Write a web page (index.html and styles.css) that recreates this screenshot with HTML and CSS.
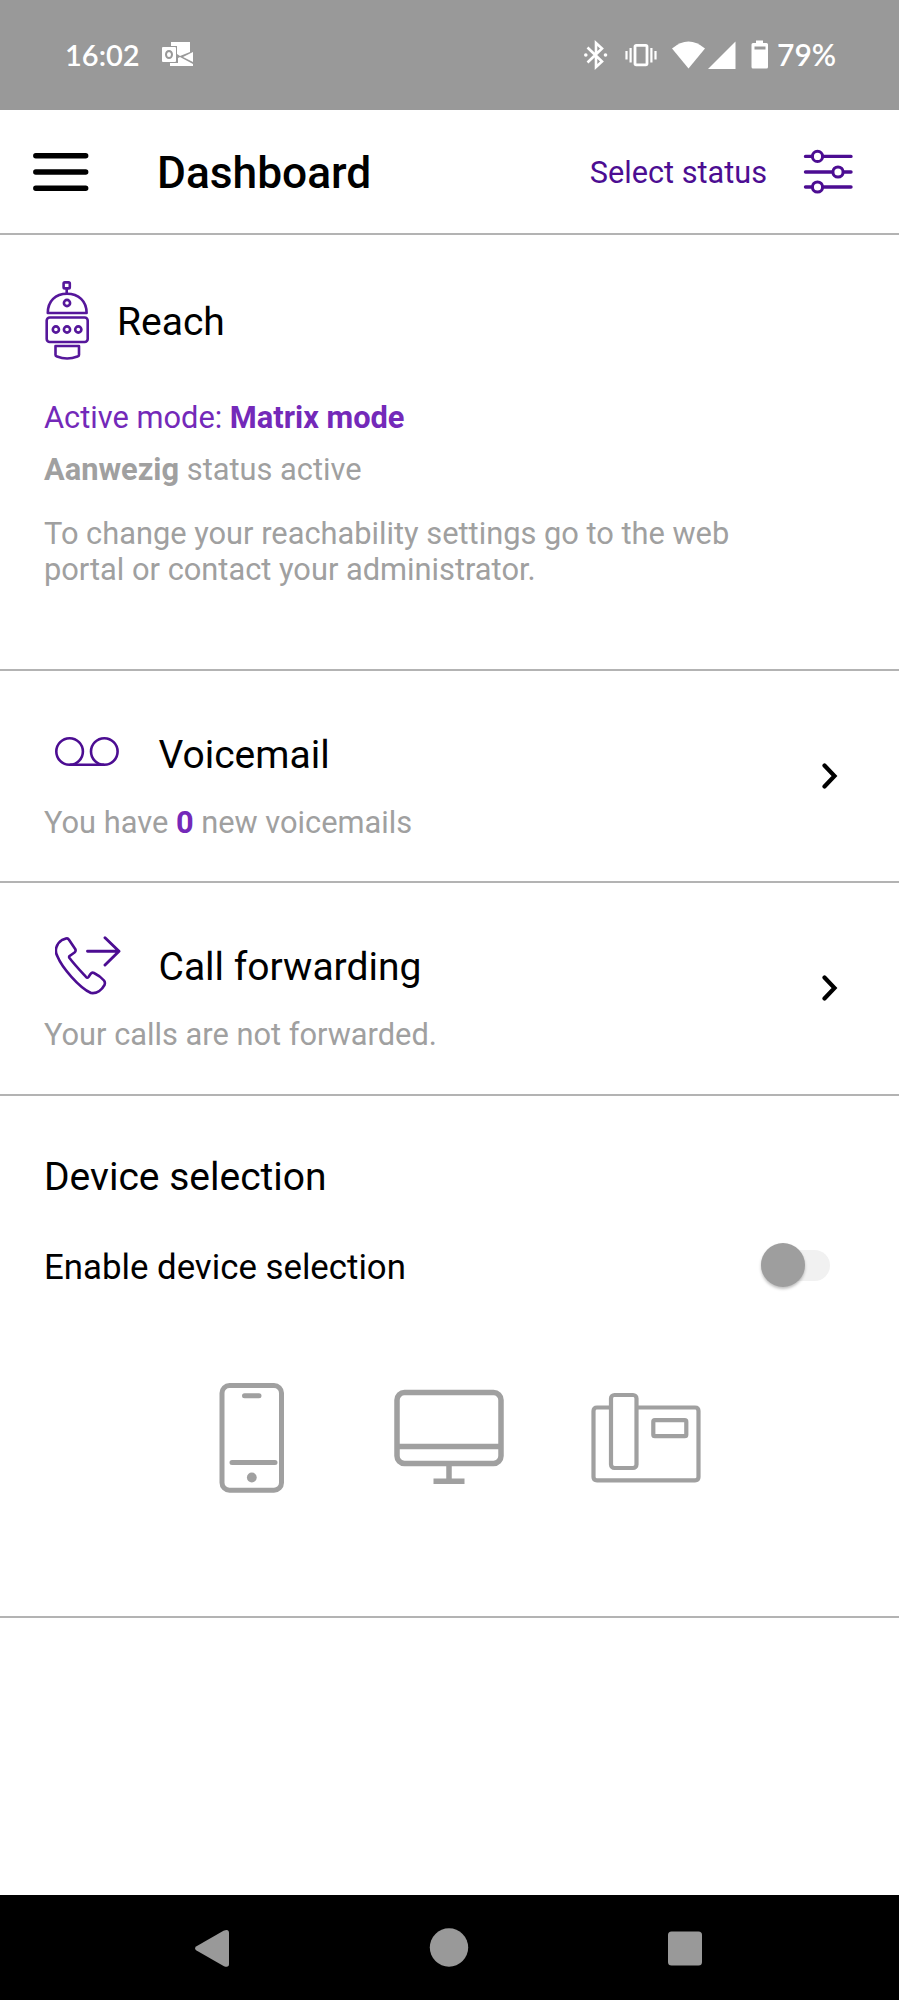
FILE: index.html
```
<!DOCTYPE html>
<html lang="en">
<head>
  <meta charset="utf-8">
  <title>Dashboard</title>
  <link rel="stylesheet" href="styles.css">
</head>
<body>
  <div class="status-bar">
    <span class="clock">16:02</span>
    <svg class="mail-icon" width="32" height="26" viewBox="0 0 32 26">
      <path d="M9 0H28V10L18 14L15 12V4H9Z" fill="#fff"/>
      <path d="M31 10V20L21 15Z" fill="#fff"/>
      <path d="M8 21H16V16L18 15L31 22V24H8Z" fill="#fff"/>
      <rect x="0" y="5" width="14" height="15" rx="1" fill="#fff"/>
      <ellipse cx="7" cy="12.5" rx="3" ry="3.6" fill="none" stroke="#999" stroke-width="2"/>
    </svg>
    <div class="status-icons">
      <svg class="bluetooth" width="24" height="30" viewBox="0 0 24 30" fill="none" stroke="#fff" stroke-width="2.6">
        <path d="M3.5 7.5L18 21.5L12 27V3L18 8.5L3.5 22.5"/>
        <circle cx="1.8" cy="15" r="1.8" fill="#fff" stroke="none"/>
        <circle cx="21.5" cy="15" r="1.8" fill="#fff" stroke="none"/>
      </svg>
      <svg class="vibrate" width="32" height="30" viewBox="0 0 32 30" fill="none" stroke="#fff">
        <rect x="10" y="5.4" width="12" height="19.4" rx="1.2" stroke-width="2.8"/>
        <path d="M1.5 11V19.5M5.6 8V22.5M26.4 8V22.5M30.5 11V19.5" stroke-width="2.2"/>
      </svg>
      <svg class="wifi" width="33" height="30" viewBox="0 0 33 30">
        <path d="M0 8.5Q16.5 -5.5 33 8.5L16.5 28.5Z" fill="#fff"/>
      </svg>
      <svg class="signal" width="28" height="30" viewBox="0 0 28 30">
        <path d="M0 29L27.5 1.5V29Z" fill="#fff"/>
      </svg>
      <svg class="battery" width="18" height="30" viewBox="0 0 18 30">
        <path d="M5 0.5H12V3H15.5Q17 3 17 4.500V27Q17 28.500 15.500 28.500H2Q0.500 28.500 0.500 27V4.500Q0.500 3 2 3H5Z" fill="#fff"/>
        <rect x="3.500" y="6.500" width="11" height="3" fill="#999"/>
      </svg>
      <span class="percent">79%</span>
    </div>
  </div>

  <header class="header">
    <svg width="56" height="40" viewBox="0 0 56 40">
      <path d="M2.800 3.700H52.700M2.800 20H52.700M2.800 36.200H52.700" stroke="#000" stroke-width="5.400" stroke-linecap="round"/>
    </svg>
    <h1 class="page-title">Dashboard</h1>
    <a class="select-status">Select status</a>
    <svg width="50" height="46" viewBox="0 0 50 46" fill="none" stroke="#4c0d92" stroke-width="3.400" stroke-linecap="round">
      <path d="M2.500 7.400H9M20 7.400H48M2.500 23H29.500M40.500 23H48M2.500 38H9M20 38H48"/>
      <circle cx="14.500" cy="7.400" r="5.100" stroke-width="3"/>
      <circle cx="35" cy="23" r="5.100" stroke-width="3"/>
      <circle cx="14.500" cy="38" r="5.100" stroke-width="3"/>
    </svg>
  </header>

  <section class="reach">
    <div class="reach-head">
      <svg width="44" height="79" viewBox="0 0 44 79" fill="none" stroke="#56179b" stroke-width="2.600" stroke-linejoin="round">
        <rect x="18.600" y="1.400" width="6.200" height="6" rx="1.200"/>
        <path d="M21.700 7.500V12.500"/>
        <path d="M2.800 32C2.800 20 10.500 12.800 22 12.800S41.600 20 41.600 32Z"/>
        <circle cx="22" cy="22" r="3.100"/>
        <rect x="1.700" y="36.500" width="41" height="24.500" rx="3"/>
        <circle cx="10.900" cy="48.500" r="3.100"/>
        <circle cx="22" cy="48.500" r="3.100"/>
        <circle cx="33.300" cy="48.500" r="3.100"/>
        <path d="M10.500 65H34V74Q34 75 32.500 75.500Q22 79.500 12 75.500Q10.500 75 10.500 74Z"/>
      </svg>
      <h2 class="title">Reach</h2>
    </div>
    <p class="mode">Active mode: <b>Matrix mode</b></p>
    <p class="presence"><b>Aanwezig</b> status active</p>
    <p class="hint">To change your reachability settings go to the web portal or contact your administrator.</p>
  </section>

  <section class="item voicemail">
    <div>
      <div class="item-head">
        <svg class="item-icon" width="66" height="60" viewBox="0 0 66 60" fill="none" stroke="#4c0d92" stroke-width="2.600">
          <circle cx="14.600" cy="27.500" r="13.300"/>
          <circle cx="49.300" cy="27.500" r="13.300"/>
          <path d="M14.600 40.800H49.300"/>
        </svg>
        <h2 class="title">Voicemail</h2>
      </div>
      <p class="info">You have <b>0</b> new voicemails</p>
    </div>
    <svg class="chevron" width="16" height="26" viewBox="0 0 16 26">
      <path d="M2.500 2.500L12.500 13L2.500 23.500" fill="none" stroke="#000" stroke-width="4.200" stroke-linecap="round"/>
    </svg>
  </section>

  <section class="item forwarding">
    <div>
      <div class="item-head">
        <svg class="item-icon" width="66" height="60" viewBox="0 0 66 60" fill="none" stroke="#4c0d92" stroke-width="2.600" stroke-linejoin="round" stroke-linecap="round">
          <path d="M7.500 3.700L11.500 2.200Q13.300 1.500 14.300 3.200L20.700 12.700Q21.800 14.700 20 16.200L15.500 19.400Q14 20.200 15 21.700C19.500 27.700 26.500 35.200 31.500 40.700Q32.800 42.200 34 40.700L36 37.700Q37.500 35.700 39.500 36.700C43.500 38.700 47 41.200 49.500 44.200Q51 46.200 50 48.700C47.500 53.200 42.500 57.700 36.500 56.700C24.500 51.200 7.500 31.200 3 20.200C-0.500 14.200 2 7.200 7.500 3.700Z" transform="translate(-0.500 0.300)"/>
          <path d="M32.500 15.300H63.500M50 1.700L64 15.300L50 29" stroke-width="2.900"/>
        </svg>
        <h2 class="title">Call forwarding</h2>
      </div>
      <p class="info">Your calls are not forwarded.</p>
    </div>
    <svg class="chevron" width="16" height="26" viewBox="0 0 16 26">
      <path d="M2.500 2.500L12.500 13L2.500 23.500" fill="none" stroke="#000" stroke-width="4.200" stroke-linecap="round"/>
    </svg>
  </section>

  <section class="devices">
    <h2 class="title">Device selection</h2>
    <div class="enable-row">
      <span class="enable-label">Enable device selection</span>
      <div class="switch"><div class="thumb"></div></div>
    </div>
    <div class="device-list">
      <svg width="110" height="110" viewBox="0 0 110 110" fill="none" stroke="#a0a0a0" stroke-width="5">
        <rect x="25" y="2.500" width="59.500" height="104.700" rx="7.500"/>
        <path d="M47.500 12.700H62M35 79.500H78" stroke-linecap="round"/>
        <circle cx="54.800" cy="94.500" r="4.900" fill="#a0a0a0" stroke="none"/>
      </svg>
      <svg width="110" height="110" viewBox="0 0 110 110" fill="none" stroke="#a0a0a0" stroke-width="5.500">
        <rect x="3" y="9.500" width="104" height="71" rx="7.500"/>
        <path d="M3 63.400H107M55 81V98M39.500 98.300H70.500"/>
      </svg>
      <svg width="110" height="110" viewBox="0 0 110 110" fill="none" stroke="#a0a0a0" stroke-width="4.200">
        <path d="M18 24.500H6Q2.500 24.500 2.500 28V94Q2.500 97.300 6 97.300H104Q107.500 97.300 107.500 94V28Q107.500 24.500 104 24.500H46"/>
        <rect x="20" y="12" width="25.500" height="73" rx="3.500"/>
        <rect x="62.300" y="37.200" width="33" height="16" rx="1.500"/>
      </svg>
    </div>
  </section>

  <nav class="nav-bar">
    <svg width="40" height="40" viewBox="0 0 40 40" fill="#999">
      <path d="M3.500 18.200L30.500 2.800Q36 0.500 36 5V36Q36 40 31 38.200L3.500 22.500Q0.500 20.300 3.500 18.200Z"/>
    </svg>
    <svg width="40" height="40" viewBox="0 0 40 40" fill="#999">
      <circle cx="20" cy="19.500" r="19.200"/>
    </svg>
    <svg width="40" height="40" viewBox="0 0 40 40" fill="#999">
      <rect x="3" y="3.500" width="34" height="34" rx="3.500"/>
    </svg>
  </nav>
</body>
</html>
```
FILE: styles.css
```
* {
  box-sizing: border-box;
}

body {
  font-family: Roboto, "Liberation Sans", sans-serif;
  margin: 0;
  height: 2000px;
  display: flex;
  flex-direction: column;
  background-color: #fff;
  color: #000;
}

h1,
h2,
p {
  margin: 0;
  font-weight: 400;
}

svg {
  display: block;
  flex-shrink: 0;
}

.status-bar {
  display: flex;
  align-items: center;
  height: 110px;
  padding: 0 62px 0 65px;
  background-color: #999;
  color: #fff;
  font-family: Lato, sans-serif;
  font-weight: 600;
  font-size: 29px;
}

.clock {
  width: 97px;
  margin-top: -2px;
}

.status-icons {
  display: flex;
  align-items: center;
  margin-left: auto;
}

.vibrate {
  margin-left: 17px;
}

.wifi {
  margin-left: 15px;
}

.signal {
  margin-left: 3px;
}

.battery {
  margin-left: 15px;
}

.percent {
  width: 60px;
  margin: -2px 0 0 8px;
  font-size: 30px;
}

.header {
  display: flex;
  align-items: center;
  height: 125px;
  padding: 0 46px 0 33px;
  border-bottom: 2px solid #b3b3b3;
}

.page-title {
  margin: 3px 0 0 68px;
  font-size: 44.3px;
  font-weight: 500;
}

.select-status {
  margin: 2px 36px 0 auto;
  font-size: 30.7px;
  color: #4c0d92;
}

.title {
  font-size: 39px;
  line-height: 46px;
}

.reach {
  height: 436px;
  padding: 46px 44px 0;
  border-bottom: 2px solid #b3b3b3;
  font-size: 30.8px;
  line-height: 36px;
  color: #a0a0a0;
}

.reach-head {
  display: flex;
  align-items: center;
  gap: 27px;
  padding-left: 1px;
  color: #000;
}

.reach-head .title {
  margin: 2px 0 0 1px;
}

.mode {
  margin-top: 40px;
  color: #7429b9;
}

.presence {
  margin-top: 16px;
}

.hint {
  max-width: 720px;
  margin-top: 28px;
}

.item {
  display: flex;
  justify-content: space-between;
  padding: 60px 61px 0 44px;
  border-bottom: 2px solid #b3b3b3;
}

.voicemail {
  height: 212px;
}

.forwarding {
  height: 213px;
}

.item-head {
  display: flex;
  align-items: center;
  height: 46px;
  padding-left: 11px;
}

.item-head .title {
  margin-top: 1px;
}

.item-icon {
  margin-right: 37.5px;
}

.info {
  margin-top: 28px;
  font-size: 30.8px;
  line-height: 36px;
  color: #a0a0a0;
}

.info b {
  color: #7429b9;
}

.chevron {
  margin-top: 32px;
}

.devices {
  height: 522px;
  padding: 58px 69px 0 44px;
  border-bottom: 2px solid #b3b3b3;
}

.enable-row {
  display: flex;
  justify-content: space-between;
  height: 44px;
  margin-top: 43px;
}

.enable-label {
  margin-top: 4px;
  font-size: 34.8px;
  line-height: 40px;
}

.switch {
  width: 69px;
  height: 31px;
  margin-top: 7px;
  border-radius: 16px;
  background-color: #f1f1f1;
}

.thumb {
  width: 44px;
  height: 44px;
  margin-top: -7px;
  border-radius: 50%;
  background-color: #9e9e9e;
  box-shadow: 0 2px 3px rgba(0, 0, 0, 0.25);
}

.device-list {
  display: flex;
  gap: 87px;
  margin: 96px 0 0 153px;
}

.nav-bar {
  display: flex;
  justify-content: center;
  align-items: center;
  gap: 196px;
  height: 105px;
  margin-top: auto;
  padding-right: 1px;
  background-color: #000;
}
```
